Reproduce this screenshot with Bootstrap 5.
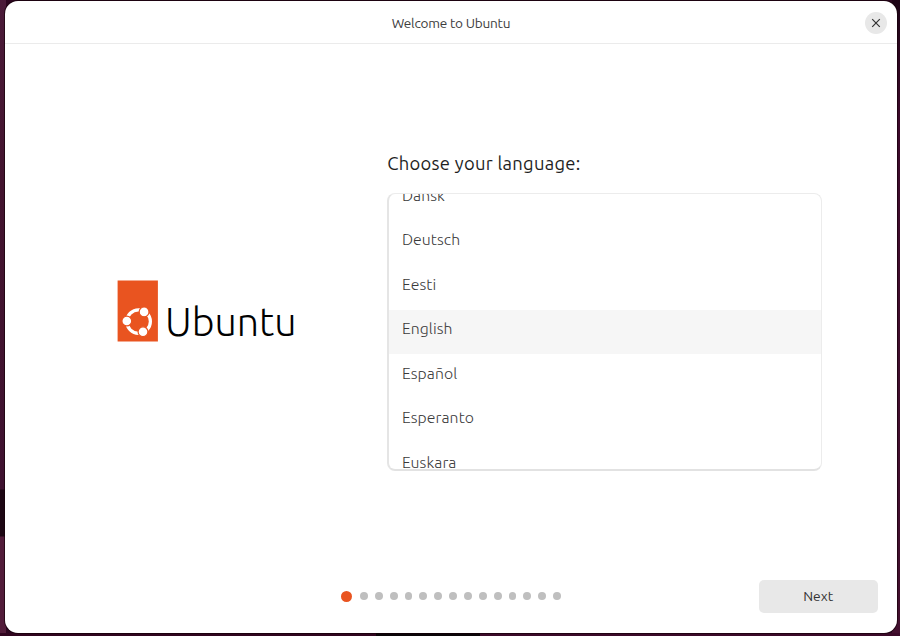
<!DOCTYPE html>
<html lang="en">
<head>
<meta charset="utf-8">
<meta name="viewport" content="width=device-width, initial-scale=1">
<title>Welcome to Ubuntu</title>
<link href="https://cdn.jsdelivr.net/npm/bootstrap@5.3.0/dist/css/bootstrap.min.css" rel="stylesheet">
<style>
body{width:900px;height:636px;padding:1.3px 3.3px 2.7px 5.2px;font-family:"Ubuntu","Noto Sans","Open Sans",sans-serif;
background:linear-gradient(to right,#30051f 0 376px,#0a0508 376px 480px,#3b0a29 480px) 0 100%/100% 3px no-repeat,
linear-gradient(#4b1b39 0,#43142f 180px,#3f1230 489px,#1d0714 490px 536px,#521c3a 537px) 0 0/6px 100% no-repeat,
linear-gradient(#1d0416,#3d0a2b 120px,#43102f) 100% 0/8px 100% no-repeat,#2c0620}
.window{border-radius:13px;box-shadow:0 0 0 1px rgba(20,0,8,.65)}
.titlebar{display:grid;grid-template-columns:1fr auto 1fr;height:43px;border-bottom:1px solid #ebebeb;padding:1px 10px 0}
.caption{font-size:13.6px;color:#3d3d3d;line-height:18px;letter-spacing:-.22px}
.close{width:22px;height:22px;background:#e8e8e8;color:#333}
.brand{width:382px;padding:236px 0 0 112px}
.chooser{width:435px;padding-top:106.5px}
.heading{font-size:18.4px;line-height:24px;margin-bottom:18px;color:#1e1e1e;white-space:nowrap;letter-spacing:.28px}
.languages{height:278px;border:1px solid #ececec;border-left:2px solid #e5e5e5;border-bottom:2px solid #e2e2e2;border-radius:8px}
.language{height:44.57px;flex:none;padding:6.3px 0 0 12.7px;font-size:15.8px;line-height:24px;font-weight:300;color:#3a3a3a;letter-spacing:.1px}
.language:first-child{margin-top:-17.6px}
.language.selected{background:#f6f6f6}
.footer-row{display:grid;grid-template-columns:1fr auto 1fr;height:33px;padding:0 19px;margin-bottom:20.6px}
.dots{gap:7px}
.dot{width:7.86px;height:7.86px;background:#bfbfbf}
.dot.current{width:11px;height:11px;background:#e95420;margin-right:1px}
.next{width:119px;height:33px;background:#e8e8e8;font-size:13.8px;color:#333;border-radius:5px;line-height:18px}
</style>
<script src="https://cdn.jsdelivr.net/npm/bootstrap@5.3.0/dist/js/bootstrap.bundle.min.js"></script>
</head>
<body class="overflow-hidden">
<main class="window bg-white h-100 d-flex flex-column overflow-hidden">
  <header class="titlebar align-items-center">
    <span></span><span class="caption">Welcome to Ubuntu</span>
    <button class="close btn p-0 border-0 rounded-circle d-flex align-items-center justify-content-center ms-auto" aria-label="Close">
      <svg width="10" height="10" viewBox="0 0 10 10" stroke="currentColor" stroke-width="1.2"><path d="M1.2 1.2 8.8 8.8M8.8 1.2 1.2 8.8"/></svg>
    </button>
  </header>
  <section class="d-flex flex-grow-1">
    <div class="brand">
      <svg class="d-block" width="182" height="66" viewBox="117 280 182 66" role="img" aria-label="Ubuntu">
        <path fill="#e95420" d="M117.6 280.5h40.3v61.1h-40.3z"/>
        <circle cx="138.6" cy="321.6" r="11.8" fill="none" stroke="#fff" stroke-width="3.2"/>
        <g fill="#fff" stroke="#e95420" stroke-width="1.2"><circle cx="126.8" cy="321" r="4.9"/><circle cx="144.1" cy="311.9" r="4.9"/><circle cx="143" cy="331.7" r="4.9"/></g>
        <text x="165" y="336.3" font-family="Ubuntu,'Noto Sans','Open Sans'" font-weight="300" font-size="40" fill="#000" textLength="131.5" lengthAdjust="spacingAndGlyphs">Ubuntu</text>
      </svg>
    </div>
    <div class="chooser">
      <h1 class="heading fw-normal">Choose your language:</h1>
      <div class="languages d-flex flex-column overflow-hidden" role="listbox">
        <div class="language">Dansk</div>
        <div class="language">Deutsch</div>
        <div class="language">Eesti</div>
        <div class="language selected">English</div>
        <div class="language">Español</div>
        <div class="language">Esperanto</div>
        <div class="language">Euskara</div>
      </div>
    </div>
  </section>
  <footer class="footer-row align-items-center">
    <span></span>
    <div class="dots d-flex align-items-center">
      <i class="dot current rounded-circle"></i><i class="dot rounded-circle"></i><i class="dot rounded-circle"></i><i class="dot rounded-circle"></i><i class="dot rounded-circle"></i><i class="dot rounded-circle"></i><i class="dot rounded-circle"></i><i class="dot rounded-circle"></i><i class="dot rounded-circle"></i><i class="dot rounded-circle"></i><i class="dot rounded-circle"></i><i class="dot rounded-circle"></i><i class="dot rounded-circle"></i><i class="dot rounded-circle"></i><i class="dot rounded-circle"></i>
    </div>
    <button class="next btn border-0 p-0 ms-auto">Next</button>
  </footer>
</main>
</body>
</html>
